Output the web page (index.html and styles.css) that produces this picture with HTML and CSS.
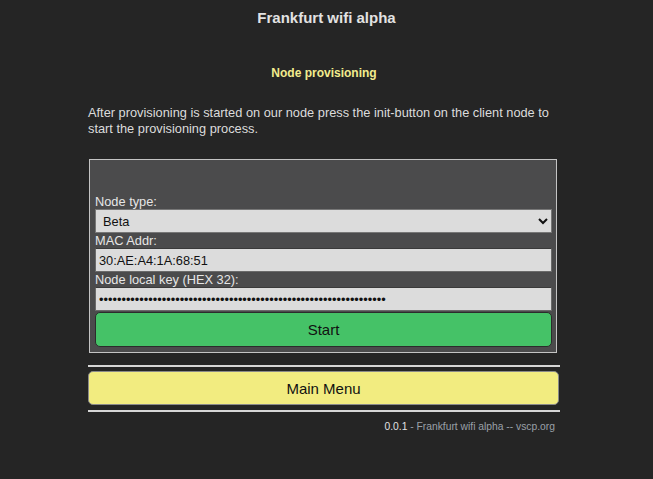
FILE: index.html
```html
<!DOCTYPE html>
<html>
<head>
<meta charset="utf-8">
<link rel="stylesheet" href="styles.css">
</head>
<body>
<h1 class="title">Frankfurt wifi alpha</h1>
<div class="wrap">
  <h2 class="subtitle">Node provisioning</h2>
  <p class="intro">After provisioning is started on our node press the init-button on the client node to start the provisioning process.</p>
  <fieldset class="box">
    <label class="lbl" for="nt">Node type:</label>
    <select id="nt" class="field sel"><option>Beta</option></select>
    <label class="lbl" for="mac">MAC Addr:</label>
    <input id="mac" class="field" type="text" value="30:AE:A4:1A:68:51">
    <label class="lbl" for="key">Node local key (HEX 32):</label>
    <input id="key" class="field" type="password" value="0123456789abcdef0123456789abcdef0123456789abcdef0123456789abcdef">
    <button class="btn start">Start</button>
  </fieldset>
  <hr class="rule">
  <button class="btn menu">Main Menu</button>
  <hr class="rule">
  <div class="foot"><span class="ver">0.0.1</span> - Frankfurt wifi alpha -- vscp.org</div>
</div>
</body>
</html>
```
FILE: styles.css
```css
html, body {
  margin: 0;
  padding: 0;
  background: #252525;
  font-family: "Liberation Sans", Arial, sans-serif;
  color: #dcdcdc;
}
.title {
  margin: 0;
  padding-top: 9px;
  height: 24px;
  font-size: 15px;
  line-height: 17px;
  text-align: center;
  color: #e2e2e2;
}
.wrap {
  width: 472px;
  margin-left: 88px;
}
.subtitle {
  margin: 32px 0 0;
  font-size: 12px;
  line-height: 16px;
  text-align: center;
  color: #f2ec8e;
}
.intro {
  margin: 24px 0 0;
  font-size: 12.8px;
  line-height: 16px;
  color: #dcdcdc;
}
.box {
  margin: 22px 3px 0 1px;
  padding: 34px 4px 5px 5px;
  border: 1px solid #c4c4c4;
  background: #4b4b4c;
  display: flex;
  flex-direction: column;
}
.lbl {
  font-size: 12.8px;
  line-height: 15px;
  color: #e6e6e6;
}
.field {
  box-sizing: border-box;
  height: 24px;
  margin: 0;
  padding: 0 3px;
  border: 1px solid #6a6a6a;
  border-top-color: #3a3a3a;
  background: #dcdcdc;
  color: #111;
  font-family: "Liberation Sans", Arial, sans-serif;
  font-size: 12.8px;
  width: 100%;
}
.sel {
  padding-left: 3px;
  border-color: #777;
}
.btn {
  box-sizing: border-box;
  width: 100%;
  font-family: "Liberation Sans", Arial, sans-serif;
  color: #111;
  cursor: pointer;
}
.start {
  height: 35px;
  margin-top: 1px;
  width: 457px;
  border: 1px solid #2c2c2c;
  border-radius: 5px;
  background: #45c267;
  font-size: 15px;
}
.rule {
  margin: 12px 0 0;
  height: 0;
  border: 0;
  border-top: 2px solid #d6d6d6;
}
.menu {
  display: block;
  margin: 4px 0 0;
  width: 471px;
  height: 34px;
  border: 1px solid #8a8a8a;
  border-radius: 5px;
  background: #f2ec80;
  font-size: 15px;
}
.menu + .rule {
  margin-top: 5px;
}
.foot {
  margin-top: 9px;
  padding-right: 5px;
  text-align: right;
  font-size: 10.3px;
  line-height: 12px;
  color: #9aa0a8;
}
.ver {
  color: #e2e2e2;
}
```
